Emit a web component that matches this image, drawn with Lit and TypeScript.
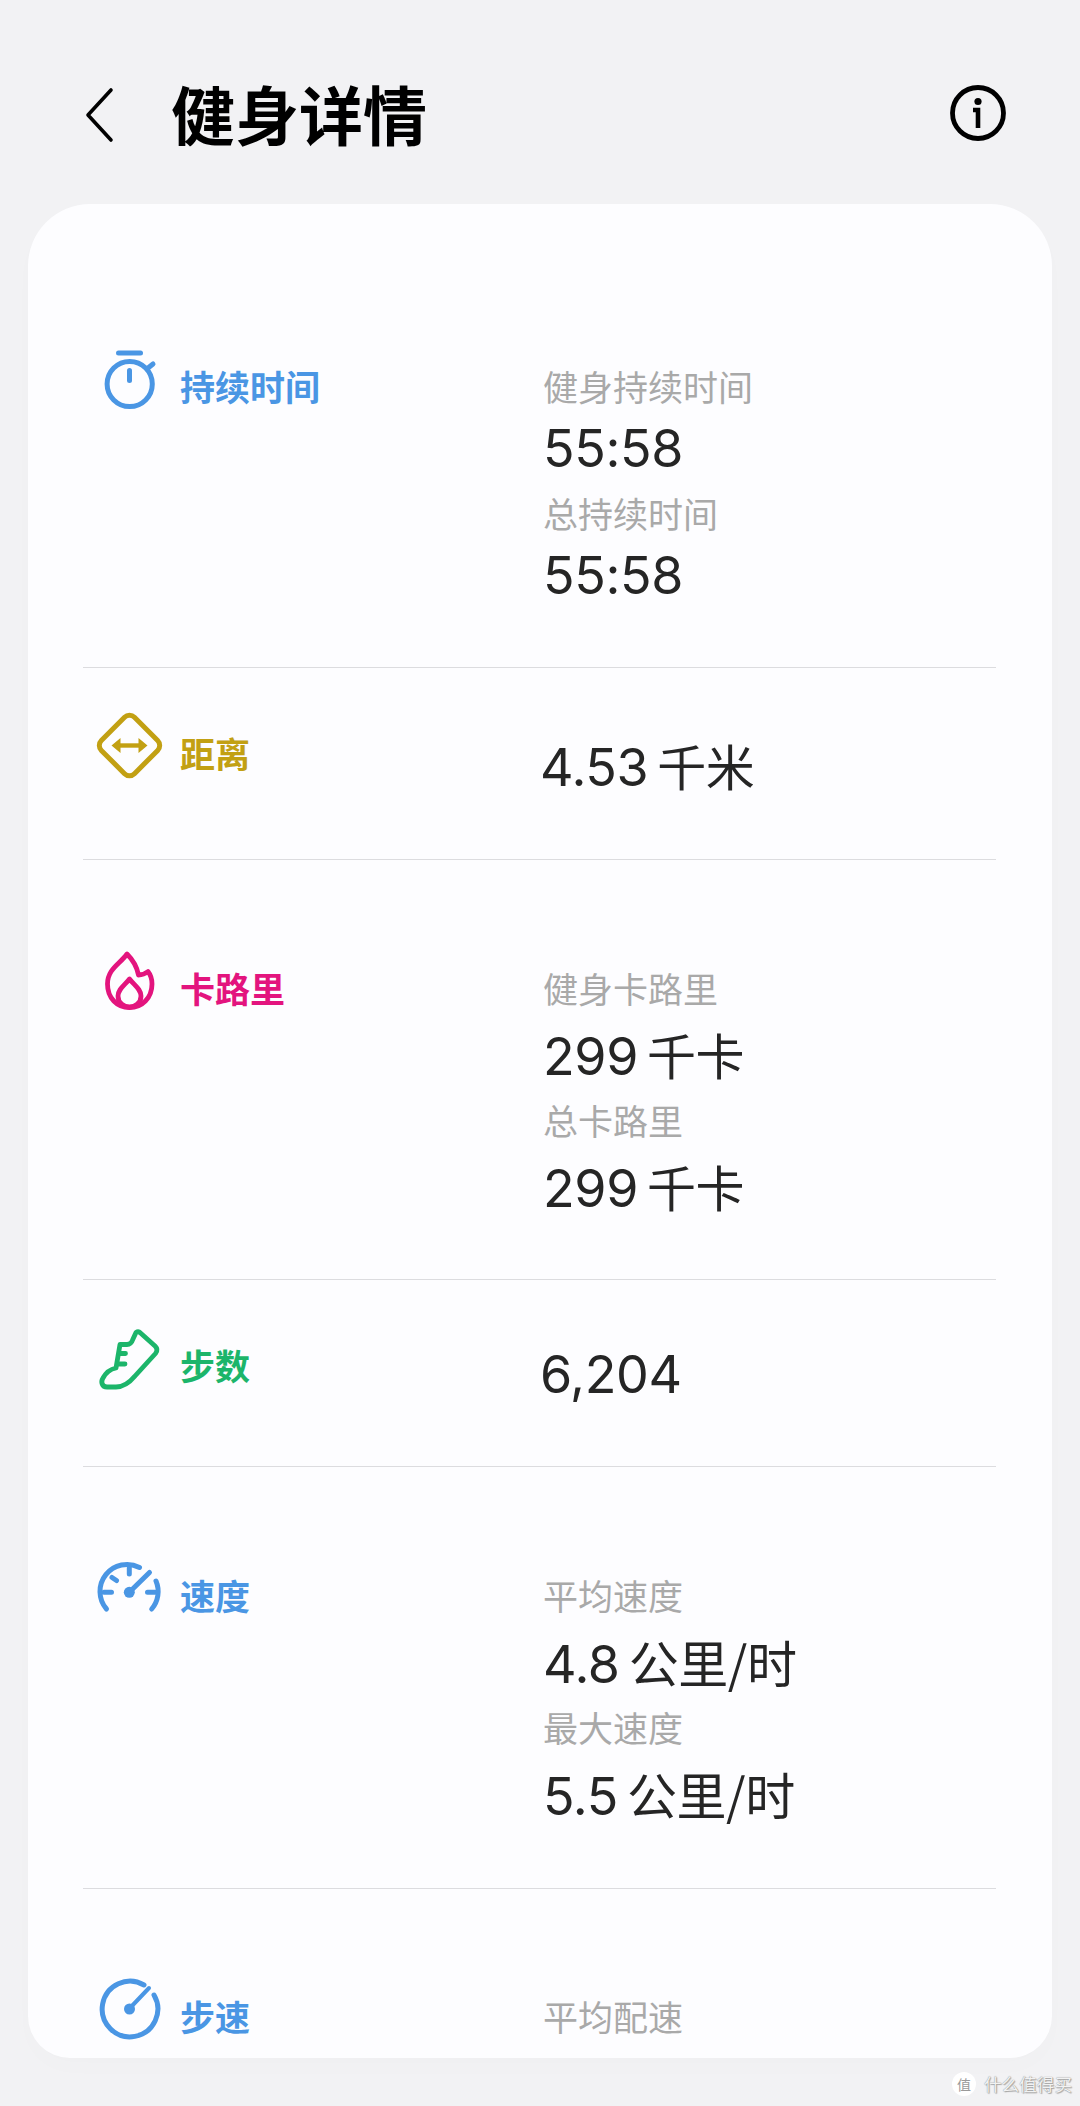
import { LitElement, html, css, svg } from "lit";
import { customElement } from "lit/decorators.js";

const icons = {
  timer: svg`<g fill="none" stroke="currentColor" stroke-width="5" stroke-linecap="round">
    <circle cx="129.7" cy="384" r="22.6"/><path d="M118.5 353h22"/><path d="M129.5 370.5v10"/><path d="M148 368l5-4"/></g>`,
  dist: svg`<g fill="none" stroke="currentColor" stroke-width="5" stroke-linejoin="round">
    <rect x="106.1" y="724.1" width="46.8" height="46.8" rx="7" transform="rotate(45 129.5 747.5)"/>
    <path d="M116 747.5h27" stroke-width="4.4"/></g>
    <path fill="currentColor" d="M111.5 747.5l9-7.5v15zM147.5 747.5l-9-7.5v15z"/>`,
  flame: svg`<g fill="none" stroke="currentColor" stroke-width="4.8" stroke-linejoin="round">
    <path d="M127 955C120 965 107.5 970 107.5 985C107.5 999 117 1008.5 129.5 1008.5C142 1008.5 152 999 152 985C152 980 150 975 148 972.5C145 975 141 976 138.5 976C137 968 132 960 127 955Z"/>
    <path d="M129.5 980C125 986 118 990 118 997C118 1004 124 1008 129.5 1008C135 1008 141 1004 141 997C141 990 134 986 129.5 980Z"/></g>`,
  shoe: svg`<g fill="none" stroke="currentColor" stroke-width="4.8" stroke-linecap="round" stroke-linejoin="round">
    <path d="M136 1332.5C137.5 1331.5 139 1331.5 140.5 1333L155 1346C157.5 1348.5 157.5 1351 155.5 1353.5L135 1376C130 1382 124 1387 116 1387H107C102 1387 100.5 1382 103 1378C106 1372.5 111 1369 116 1368L120 1344.5H127C130 1344.5 132 1342 133 1339Z"/>
    <path d="M120 1353.5h5.5M117.5 1364h7.5"/></g>`,
  speed: svg`<g fill="none" stroke="currentColor" stroke-width="5" stroke-linecap="round">
    <path d="M106.5 1610A27 27 0 0 1 139.5 1568.5"/><path d="M156 1582A27 27 0 0 1 151.7 1610"/>
    <path d="M129.3 1569v6M112 1578.5l4.5 3M104 1593.3h7.5M147.5 1593.3h7.5M129.3 1593.3L149.5 1573.5"/></g>
    <circle cx="129.3" cy="1593.3" r="5.5" fill="currentColor"/>`,
  pace: svg`<g fill="none" stroke="currentColor" stroke-width="5" stroke-linecap="round">
    <path d="M144 1986A27.8 27.8 0 1 0 154 1996"/><path d="M130 2009L149 1989" stroke-width="4"/></g>
    <circle cx="129.5" cy="2010" r="5.5" fill="currentColor"/>`,
};

interface Stat { label?: string; value: string; }
interface Row {
  key: keyof typeof icons; view: string; name: string; color: string;
  stats: Stat[]; mode: string;
}

const rows: Row[] = [
  { key: "timer", view: "90 346 80 80", name: "持续时间", color: "blue", mode: "duration",
    stats: [{ label: "健身持续时间", value: "55:58" }, { label: "总持续时间", value: "55:58" }] },
  { key: "dist", view: "90 715 80 80", name: "距离", color: "gold", mode: "distance",
    stats: [{ value: "4.53 千米" }] },
  { key: "flame", view: "90 949 80 80", name: "卡路里", color: "pink", mode: "calories",
    stats: [{ label: "健身卡路里", value: "299 千卡" }, { label: "总卡路里", value: "299 千卡" }] },
  { key: "shoe", view: "90 1325 80 80", name: "步数", color: "green", mode: "steps",
    stats: [{ value: "6,204" }] },
  { key: "speed", view: "90 1556 80 80", name: "速度", color: "blue", mode: "speed",
    stats: [{ label: "平均速度", value: "4.8 公里/时" }, { label: "最大速度", value: "5.5 公里/时" }] },
  { key: "pace", view: "90 1977 80 80", name: "步速", color: "blue", mode: "pace",
    stats: [{ label: "平均配速", value: "" }] },
];

@customElement("app-root")
export class AppRoot extends LitElement {
  static styles = css`
    :host {
      display: block; position: relative; height: 2106px; overflow: hidden;
      background: #f2f2f4; color: #252525;
      font-family: "Inter", "Noto Sans CJK SC", sans-serif;
    }
    .cjk { font-family: "Noto Sans CJK SC", sans-serif; font-size: 49px; margin-left: 9px; }
    .speed .cjk { font-size: 50px; }
    header {
      height: 174px; padding: 30px 72px 0 84px;
      display: flex; align-items: center;
    }
    header h1 {
      margin: 0 0 10px 57px; flex: 1; font-size: 64px; font-weight: 700; color: #000; line-height: 80px;
      font-family: "Noto Sans CJK SC", sans-serif;
    }
    .back { width: 30px; height: 56px; display: block; margin-bottom: 4px; }
    .info { width: 60px; height: 60px; display: block; margin-top: -8px; }
    .card {
      margin: 0 28px; height: 1854px; box-sizing: border-box;
      background: #fdfdff; border-radius: 62px 62px 42px 42px;
      padding: 53px 56px 0 55px;
      box-shadow: 0 10px 26px rgba(0, 0, 0, 0.012);
    }
    .row { display: flex; border-bottom: 1px solid #dcdcdf; padding-left: 7px; }
    .duration { padding-top: 89px; padding-bottom: 62px; }
    .distance { padding-top: 45px; padding-bottom: 58px; }
    .calories { padding-top: 88px; padding-bottom: 57px; }
    .steps { padding-top: 45px; padding-bottom: 55px; }
    .speed { padding-top: 88px; padding-bottom: 59px; }
    .pace { padding-top: 87px; border-bottom: 0; }
    .head { display: flex; align-items: center; width: 453px; height: 80px; flex: none; }
    .head svg { width: 80px; height: 80px; display: block; overflow: visible; flex: none; }
    .name {
      margin-left: 10px; font-size: 35px; line-height: 50px; font-weight: 700;
      font-family: "Noto Sans CJK SC", sans-serif;
    }
    .blue { color: #4a96e4; }
    .gold { color: #c2a013; }
    .pink { color: #e3147e; }
    .green { color: #1cb56a; }
    .vals { padding-top: 10px; }
    .distance .vals { padding-top: 16px; margin-left: -3px; }
    .steps .vals { padding-top: 14px; margin-left: -3px; }
    .gray {
      height: 60px; font-size: 35px; line-height: 60px; color: #a9a9a9;
      font-family: "Noto Sans CJK SC", sans-serif;
    }
    .val { height: 72px; font-size: 52px; letter-spacing: -0.4px; line-height: 72px; white-space: nowrap; }
    .duration .val { height: 62px; line-height: 65px; }
    .duration .val + .gray { margin-top: 5px; }
    .mark {
      position: absolute; right: 8px; bottom: 10px; display: flex; align-items: center; gap: 8px;
      color: #f2f2f2; font-size: 17.6px; line-height: 24px;
      font-family: "Noto Sans CJK SC", sans-serif;
      text-shadow: 0 0 1px #777, 1px 1px 1px #aaa;
    }
    .badge {
      width: 24px; height: 24px; border-radius: 50%; background: #fff;
      color: #9a9a9a; font-size: 14px; text-align: center; text-shadow: none;
    }
  `;

  private renderValue(v: string) {
    const m = v.match(/^([\d.,:]+)(?: (.*))?$/);
    if (!m) return v;
    return html`${m[1]}${m[2] ? html`<span class="cjk">${m[2]}</span>` : ""}`;
  }

  render() {
    return html`
      <header>
        <svg class="back" viewBox="0 0 30 56" fill="none" stroke="#000" stroke-width="3.6" stroke-linecap="round" stroke-linejoin="round">
          <path d="M27 3L4 28L27 53"/>
        </svg>
        <h1>健身详情</h1>
        <svg class="info" viewBox="0 0 60 60">
          <circle cx="30" cy="30" r="25.5" fill="none" stroke="#000" stroke-width="4.8"/>
          <circle cx="30" cy="18.5" r="3.6" fill="#000"/>
          <path d="M25 27h5v18" fill="none" stroke="#000" stroke-width="4.6"/>
        </svg>
      </header>
      <div class="card">
        ${rows.map(r => html`
          <div class="row ${r.mode}">
            <div class="head ${r.color}">
              <svg viewBox=${r.view}>${icons[r.key]}</svg>
              <span class="name">${r.name}</span>
            </div>
            <div class="vals">
              ${r.stats.map(s => html`
                ${s.label ? html`<div class="gray">${s.label}</div>` : ""}
                ${s.value ? html`<div class="val">${this.renderValue(s.value)}</div>` : ""}
              `)}
            </div>
          </div>
        `)}
      </div>
      <div class="mark"><span class="badge">值</span><span>什么值得买</span></div>
    `;
  }
}
